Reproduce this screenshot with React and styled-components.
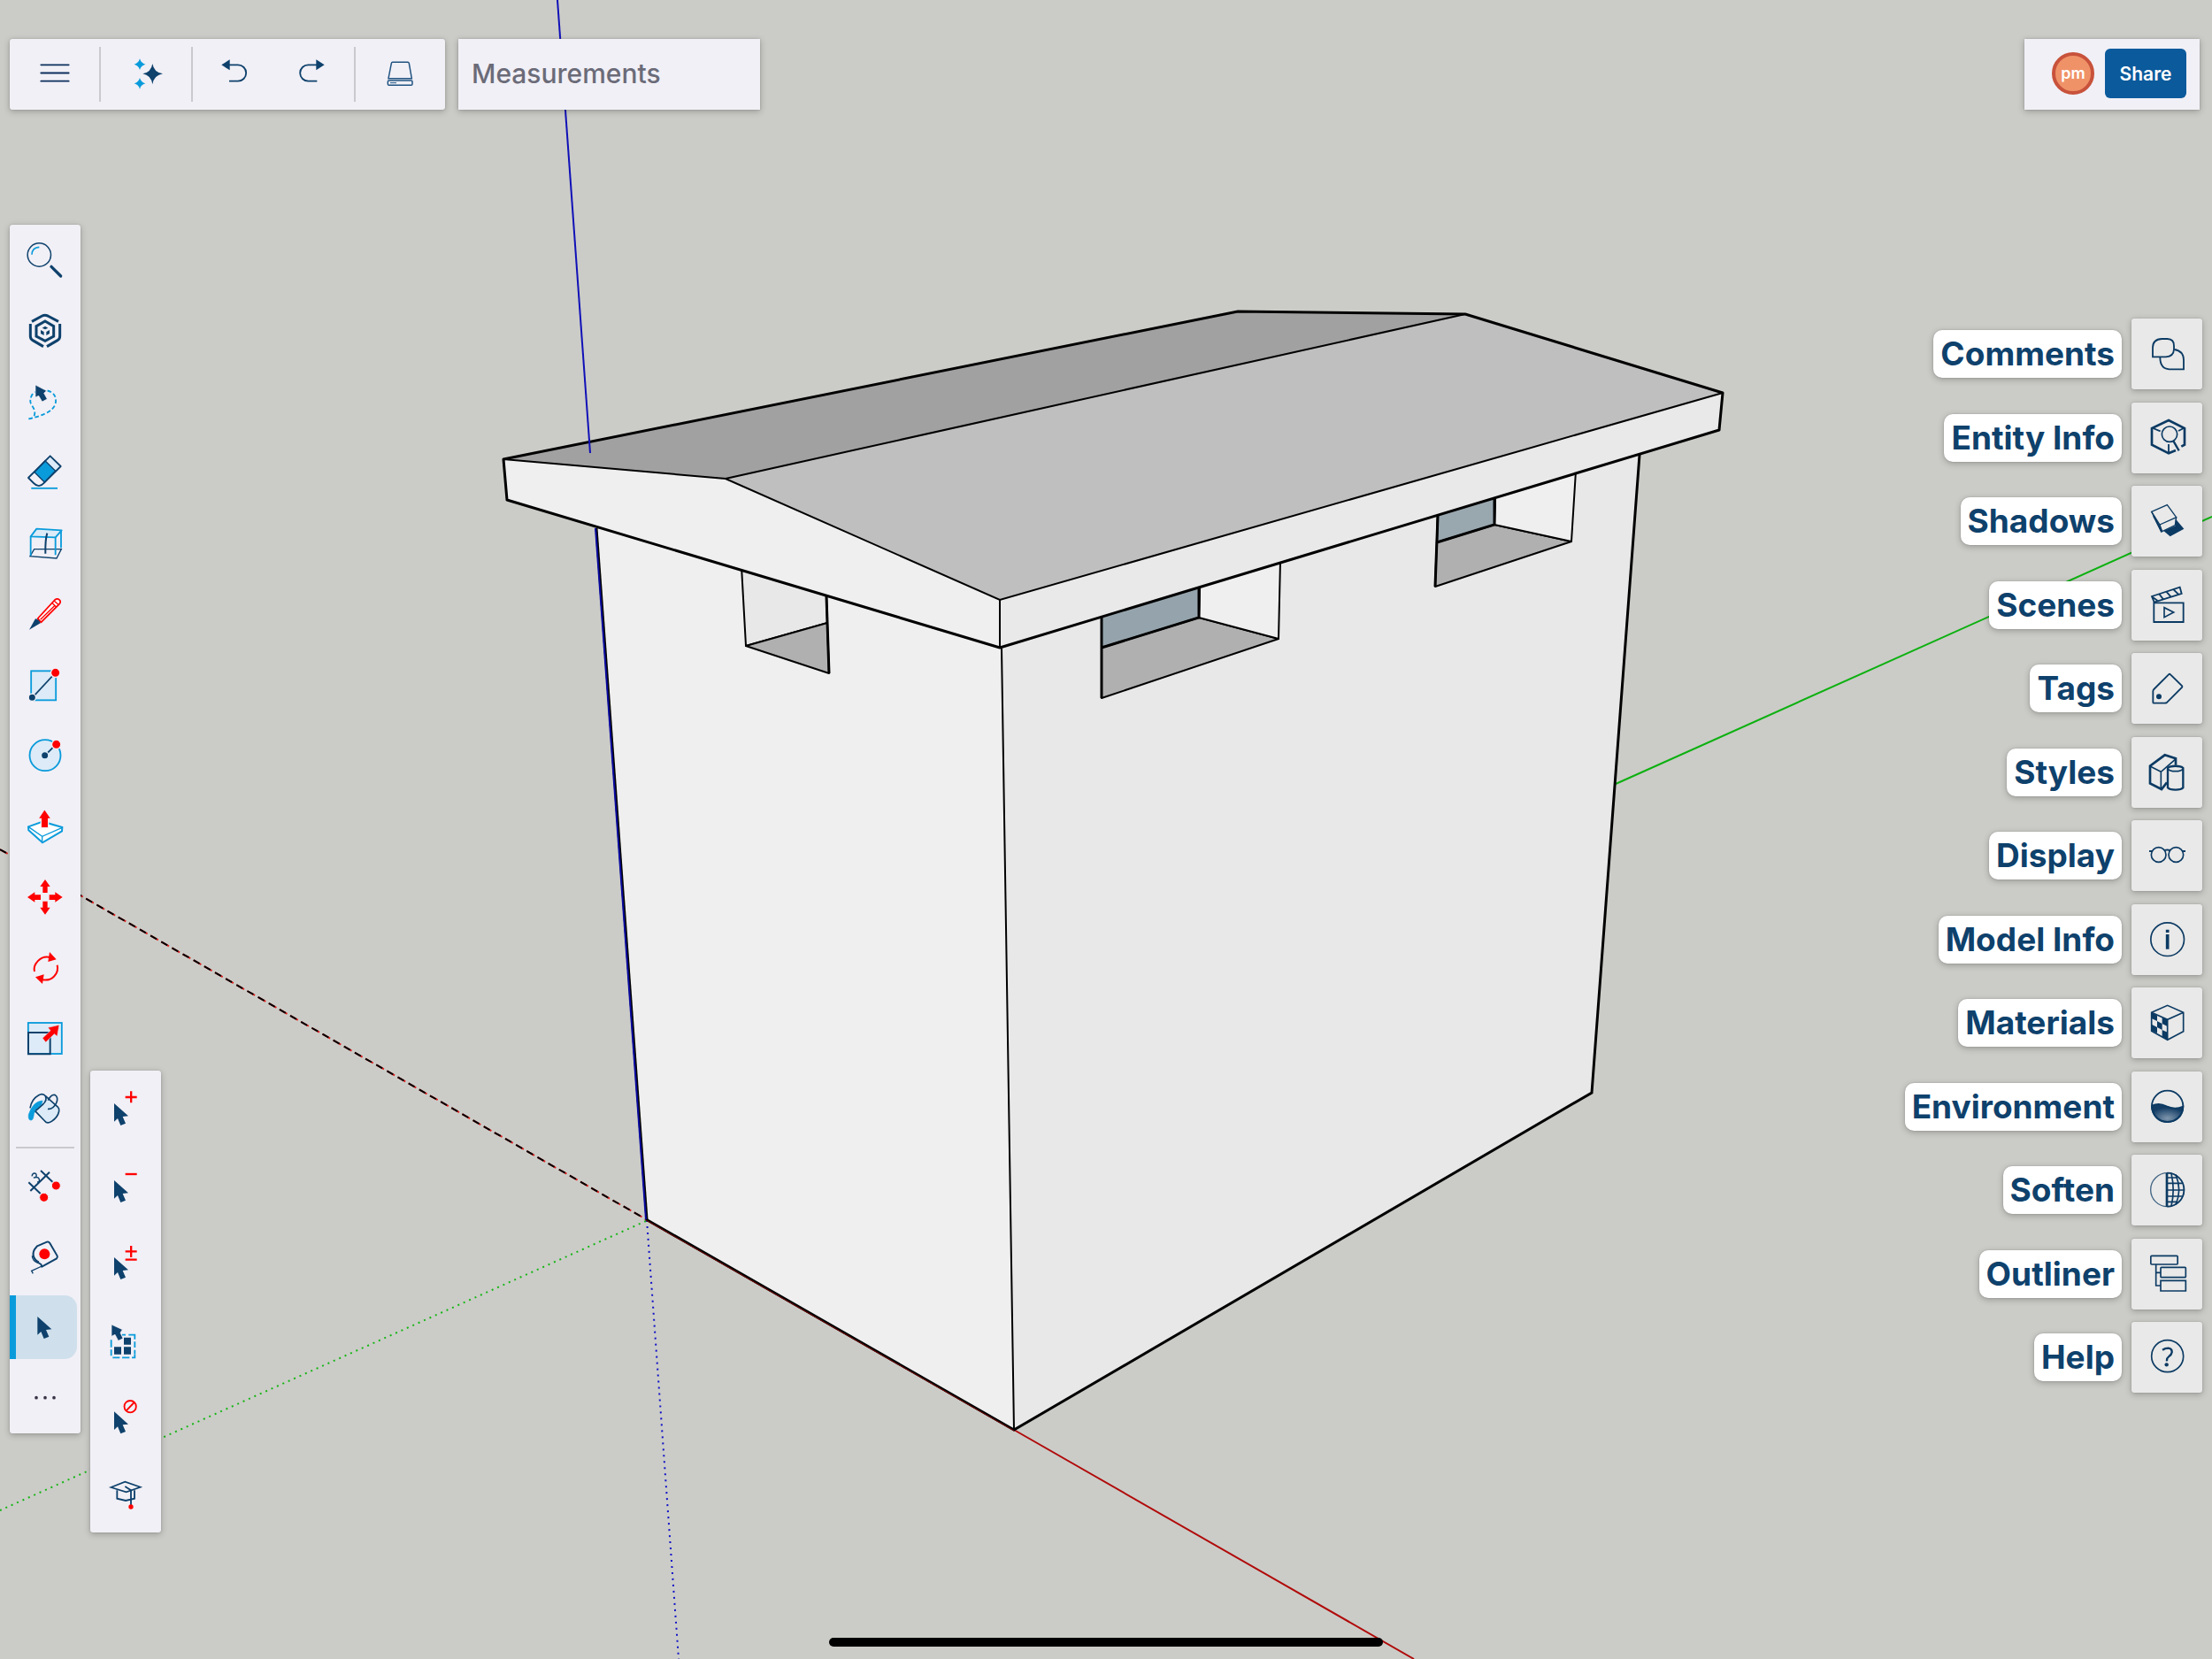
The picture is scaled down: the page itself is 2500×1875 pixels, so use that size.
import React from "react";
import styled, { createGlobalStyle } from "styled-components";

const navy = "#0e416c";
const ink = "#0b3a63";
const blue = "#0a9bdb";
const pale = "#dcebf7";
const red = "#ff0000";
const panel = "#f1f0f6";
const shadow = "0 2px 7px rgba(40, 40, 40, 0.3), 0 0 2px rgba(40, 40, 40, 0.2)";

const GlobalStyle = createGlobalStyle`
  * { box-sizing: border-box; }
  body { margin: 0; background: #cbccc7; font-family: Inter, "Liberation Sans", sans-serif; }
  button { margin: 0; padding: 0; border: 0; background: none; font: inherit; cursor: pointer; }
`;

const Shell = styled.div`
  position: relative;
  min-height: 100vh;
  display: flex;
  flex-direction: column;
  overflow: hidden;
  background: #cbccc7;
`;

/* The model view fills the window and lies under every panel. */
const Scene = styled.svg`
  position: absolute;
  inset: 0;
  width: 100%;
  height: 100%;
`;

const Header = styled.header`
  position: relative;
  display: flex;
  gap: 15px;
  padding: 44px 14px 0 11px;
`;

const TopBar = styled.div`
  display: flex;
  align-items: center;
  width: 492px;
  height: 80px;
  border-radius: 3px;
  background: ${panel};
  box-shadow: ${shadow};
`;

const TopButton = styled.button`
  flex: 1;
  display: flex;
  justify-content: center;
`;

const TopPair = styled.div`
  display: flex;
  width: 182px;
  padding: 0 3px;
`;

const TopDivider = styled.div`
  width: 2px;
  height: 62px;
  background: #cacace;
`;

const MeasureBox = styled.input`
  width: 341px;
  height: 80px;
  padding: 0 15px 2px;
  border: 0;
  border-radius: 0;
  outline: 0;
  background: ${panel};
  box-shadow: ${shadow};
  color: #6b6b78;
  font: 500 30px/36px Inter, "Liberation Sans", sans-serif;
  &::placeholder { color: #6b6b78; opacity: 1; }
`;

const Account = styled.div`
  display: flex;
  align-items: center;
  gap: 12px;
  height: 80px;
  margin-left: auto;
  padding: 0 15px 2px 31px;
  background: ${panel};
  box-shadow: ${shadow};
`;

const Avatar = styled.button`
  width: 48px;
  height: 48px;
  border: 4px solid #c8523b;
  border-radius: 50%;
  background: #f09268;
  color: #fff;
  font-size: 18px;
  font-weight: 600;
  line-height: 36px;
`;

const ShareButton = styled.button`
  width: 92px;
  height: 56px;
  border-radius: 6px;
  background: #0a5a9c;
  color: #fff;
  font-size: 21px;
  font-weight: 600;
`;

const Workspace = styled.main`
  position: relative;
  display: flex;
  align-items: flex-start;
  gap: 11px;
  padding: 130px 11px 0;
`;

const ToolRail = styled.div`
  display: flex;
  flex-direction: column;
  width: 80px;
  border-radius: 3px;
  background: ${panel};
  box-shadow: ${shadow};
`;

const RailDivider = styled.div`
  height: 2px;
  margin: 2px 7px;
  background: #cacace;
`;

const ToolButton = styled.button`
  display: flex;
  height: 80px;
  padding: 0;
  background: ${(p) =>
    p.$active ? `linear-gradient(90deg, ${blue} 7px, #cfe0ec 7px)` : "none"};
  ${(p) =>
    p.$active &&
    `height: 72px; margin: 4px 4px 4px 0; align-items: center; border-radius: 0 14px 14px 0;`}
`;

const Flyout = styled.div`
  display: flex;
  flex-direction: column;
  width: 80px;
  margin-top: 956px;
  border-radius: 3px;
  background: ${panel};
  box-shadow: ${shadow};
`;

const FlyoutButton = styled.button`
  display: flex;
  height: 87px;
`;

const PanelList = styled.nav`
  display: flex;
  flex-direction: column;
  justify-content: space-between;
  align-items: flex-end;
  min-height: 1214px;
  margin: 106px 0 0 auto;
`;

const PanelButton = styled.button`
  display: flex;
  align-items: center;
  gap: 11px;
`;

const PanelLabel = styled.span`
  height: 54px;
  padding: 0 8px;
  border-radius: 10px;
  background: #fff;
  box-shadow: ${shadow};
  color: ${navy};
  font-size: 37px;
  font-weight: 700;
  line-height: 53px;
  white-space: nowrap;
`;

const PanelTile = styled.span`
  display: flex;
  width: 80px;
  height: 80px;
  border-radius: 3px;
  background: #e9e9e9;
  box-shadow: ${shadow};
`;

const IconSvg = styled.svg`
  display: block;
  flex: none;
  fill: none;
  stroke-width: 5.5;
`;

/* Icons are drawn at three units to the pixel; x and y name the corner of the icon's cell. */
function Icon({ x, y, h = 80, children, color = navy }) {
  return (
    <IconSvg width="80" height={h} viewBox={`${x} ${y} 240 ${h * 3}`} stroke={color} aria-hidden="true">
      {children}
    </IconSvg>
  );
}

const cursorPath = "M0 0V62L12 51L22 75L39 68L29 45L48 43Z";
const Cursor = ({ x, y }) => (
  <path d={cursorPath} fill={navy} stroke="none" transform={`translate(${x} ${y})`} />
);

const topIcons = {
  menu: (
    <Icon x={65} y={42}>
      <path d="M138 130H232M138 157.500H232M138 185H232" strokeLinecap="round" stroke="#0c2f5c" />
    </Icon>
  ),
  sparkles: (
    <Icon x={375} y={42}>
      <path d="M517 126Q522 156 552 160Q522 165 517 196Q512 165 484 160Q512 156 517 126Z" fill={navy} stroke="none" />
      <path d="M474 109Q478 124 493 128Q478 132 474 147Q470 132 455 128Q470 124 474 109ZM474 174Q478 189 493 193Q478 197 474 212Q470 197 455 193Q470 189 474 174Z" fill={blue} stroke="none" />
    </Icon>
  ),
  undo: (
    <Icon x={674} y={42}>
      <path d="M776 130H806A27.500 27.500 0 0 1 806 185H776" />
      <path d="M750 130L778 112V148Z" fill={navy} stroke="none" />
    </Icon>
  ),
  redo: (
    <Icon x={938} y={42}>
      <path d="M1074 130H1044A27.500 27.500 0 0 0 1044 185H1074" />
      <path d="M1099 130L1071 112V148Z" fill={navy} stroke="none" />
    </Icon>
  ),
  drive: (
    <Icon x={1237} y={42}>
      <g strokeWidth="4.500" stroke="#1f5280">
        <path d="M1332 121H1384Q1387 121 1388 125L1397 176H1318L1328 125Q1329 121 1332 121Z" />
        <rect x="1316" y="183" width="83" height="16" rx="4" />
        <path d="M1324 191H1345" strokeWidth="3" />
      </g>
    </Icon>
  ),
};

const tools = [
  ["Search", <Icon x={33} y={42}>
    <circle cx="133" cy="144" r="39.500" strokeWidth="4.500" />
    <path d="M108 143Q109 119 133 118" stroke={blue} strokeWidth="5" />
    <path d="M174 184L206 216" strokeWidth="10" strokeLinecap="round" />
  </Icon>],
  ["3D Warehouse", <Icon x={33} y={282}>
    <g strokeWidth="9">
      <path d="M108 370L143 351Q152 347 162 351L198 370" />
      <path d="M103 378V420Q103 429 111 434L147 455M203 378V420Q203 429 195 434L159 455" />
      <path d="M153 369L182 386V420L153 436L123 420V386Z" />
    </g>
    <path d="M153 386L163 392L153 397L143 392ZM138 399L149 405V417L138 411ZM168 399L157 405V417L168 411Z" fill={navy} stroke="none" />
  </Icon>],
  ["Lasso", <Icon x={33} y={522}>
    <path d="M97 700Q114 700 117 686Q121 672 108 655Q97 640 109 618C130 596 176 598 187 625C196 655 180 682 97 700" stroke={blue} strokeDasharray="14 8" />
    <path d="M120 585L158 605L149 613L160 633L143 642L131 622L120 627Z" fill={navy} stroke={panel} strokeWidth="2" />
  </Icon>],
  ["Eraser", <Icon x={33} y={762}>
    <path d="M155 843L170 825L206 861L188 878Z" fill={pale} stroke="none" />
    <path d="M153 842L188 877L151 915L117 881Z" fill={blue} strokeWidth="4" />
    <path d="M170 826L206 861L150 917Q132 937 114 918L96 900Z" strokeLinejoin="round" />
    <path d="M106 935.500H195" stroke={blue} />
  </Icon>],
  ["Box", <Icon x={33} y={1002}>
    <path d="M102 1166L116 1142H208L192 1173Z" strokeWidth="4" />
    <path d="M104 1099L124 1073L209 1078L188 1102Z" fill={pale} stroke={blue} strokeLinejoin="round" />
    <path d="M104 1099V1164M188 1102V1162M207 1080V1138" stroke={blue} />
    <path d="M160 1088Q153 1110 154 1157" strokeWidth="6" />
  </Icon>],
  ["Line", <Icon x={33} y={12}>
    <path d="M128 147L186 84Q196 76 204 87Q206 93 202 97L139 160Z" stroke={red} fill="#fff" strokeLinejoin="round" />
    <path d="M137 151L187 102M176 94L191 108M184 88L198 100" stroke={red} strokeWidth="4" />
    <path d="M99 185L120 148Q132 149 137 163Z" fill={navy} stroke="none" />
  </Icon>],
  ["Rectangle", <Icon x={33} y={252}>
    <rect x="105.500" y="325" width="84" height="99" fill={pale} stroke={blue} />
    <path d="M110 415L188 331" strokeWidth="5" />
    <circle cx="109" cy="415" r="12.500" fill={navy} stroke={panel} strokeWidth="4" />
    <circle cx="188" cy="331" r="15.500" fill={red} stroke={panel} strokeWidth="4" />
  </Icon>],
  ["Circle", <Icon x={33} y={492}>
    <circle cx="153" cy="611" r="52.500" fill={pale} stroke={blue} />
    <path d="M153 611L190 574" />
    <circle cx="152" cy="611" r="12.500" fill={navy} stroke={pale} strokeWidth="4" />
    <circle cx="191" cy="574" r="15.500" fill={red} stroke={panel} strokeWidth="4" />
  </Icon>],
  ["Push/Pull", <Icon x={33} y={732}>
    <path d="M96 853L145 836L211 855L210 868L144 907L97 865Z" fill="#fff" stroke={blue} strokeWidth="6" />
    <path d="M96 853L143 886L211 856M143 886V905" stroke={blue} strokeWidth="4" />
    <path d="M151 793L174 826H164V857H139V826H129Z" fill={red} stroke={panel} strokeWidth="4" />
  </Icon>],
  ["Move", <Icon x={33} y={972}>
    <path d="M153 1032L170 1056H161V1077H145V1056H136ZM153 1151L170 1127H161V1106H145V1127H136ZM93 1092L118 1075V1084H138V1101H118V1109ZM212 1092L187 1075V1084H167V1101H187V1109Z" fill={red} stroke="none" />
  </Icon>],
  ["Rotate", <Icon x={33} y={-18}>
    <path d="M117 114C111 91 136 58 170 66M194 92C201 120 176 150 142 141" stroke={red} strokeWidth="6" />
    <path d="M168 48L191 73L163 81ZM144 156L120 133L149 124Z" fill={red} stroke="none" />
  </Icon>],
  ["Scale", <Icon x={33} y={222}>
    <rect x="95.500" y="288" width="114" height="105" fill={pale} stroke={blue} />
    <path d="M96 321H170V394H96Z" strokeWidth="6" />
    <path d="M201 295L194 334L184 326L155 354L144 340L171 314L162 304Z" fill={red} stroke={pale} strokeWidth="2" />
  </Icon>],
  ["Paint", <Icon x={33} y={462}>
    <path d="M155 539L198 577C206 594 181 632 156 626L120 591L148 545Z" fill={pale} stroke="none" />
    <path d="M144 552Q112 554 97 599Q95 617 104 618Q113 620 115 596L121 584L141 564Z" fill={blue} stroke={blue} strokeWidth="2" />
    <path d="M119 587L152 621Q160 632 175 622Q196 608 200 588Q202 579 196 573L155 537Q145 524 130 534Q107 547 102 577" strokeWidth="5" />
    <path d="M154 537Q161 550 145 565L121 586M163 551Q174 529 187 533Q199 541 191 560Q179 583 162 580" strokeWidth="5" />
  </Icon>],
];

const measureTools = [
  ["Dimension", <Icon x={33} y={0}>
    <path d="M103 138L168 74M97 109L137 147M138 69L178 107" strokeWidth="6" />
    <path d="M109 88C107 75 127 75 123 88Q120 94 114 93Q129 89 132 96Q137 108 126 108" strokeWidth="4.500" />
    <circle cx="190" cy="120" r="15" fill={red} stroke={panel} strokeWidth="3" />
    <circle cx="149" cy="160" r="15" fill={red} stroke={panel} strokeWidth="3" />
  </Icon>],
  ["Tape Measure", <Icon x={33} y={240}>
    <path d="M126 325L159 311Q165 309 169 315L194 358Q196 363 192 367L142 395L139 387Q102 365 117 336Z" strokeWidth="6" />
    <path d="M142 393L107 409L112 418M109 358Q110 377 130 383M114 359Q116 371 132 378" strokeWidth="4" />
    <circle cx="151" cy="352" r="18" fill={red} stroke="none" />
  </Icon>],
];

const flyoutTools = [
  ["Add", <Icon x={306} y={-9} h={87}>
    <Cursor x={387} y={102} />
    <path d="M425 81H464M444.500 61V100" stroke={red} strokeWidth="7" />
  </Icon>],
  ["Subtract", <Icon x={306} y={-9} h={87}>
    <Cursor x={387} y={102} />
    <path d="M425 81H464" stroke={red} strokeWidth="7" />
  </Icon>],
  ["Add/Subtract", <Icon x={306} y={252} h={87}>
    <Cursor x={387} y={363} />
    <path d="M425 343H464M444.500 324V363M425 371H464" stroke={red} strokeWidth="7" />
  </Icon>],
  ["Select All", <Icon x={306} y={513} h={87}>
    <path d="M414 626H426M436 626H457V641M457 649V669M457 677V690M457 691V703H447M439 703H414M406 703H382M377 697V676M377 668V643" stroke={blue} />
    <path d="M387 667H411V692H387ZM420 667H444V692H420ZM420 635H444V659H420Z" fill={navy} stroke="none" />
    <path d="M378 591L415 608L408 619L417 638L401 646L390 625L378 631Z" fill={navy} stroke={panel} strokeWidth="2" />
  </Icon>],
  ["Select None", <Icon x={306} y={774} h={87}>
    <Cursor x={387} y={886} />
    <circle cx="441.500" cy="869" r="20" stroke={red} />
    <path d="M428 883L455 855" stroke={red} />
  </Icon>],
  ["Learn", <Icon x={0} y={0} h={87}>
    <path d="M70 108L118 89L170 107L122 124Z" strokeWidth="5" />
    <path d="M91 118V146L120 153L150 146V118M118 105L138 118V172" />
    <circle cx="138" cy="174" r="8" fill={red} stroke="none" />
  </Icon>],
];

const panels = [
  ["Comments", <Icon x={807} y={59} color={ink}>
    <path d="M879 189V158Q879 129 910 128H929Q951 129 951 151V163Q950 187 924 189Z" />
    <path d="M952 164Q984 169 984 200V231H935Q904 229 904 191" />
  </Icon>],
  ["Entity Info", <Icon x={807} y={343} color={ink}>
    <path d="M957 505L933 515L876 486V430L933 403L987 430V486L976 492" strokeWidth="8" />
    <path d="M880 430L905 440M984 430L966 439M933 484V512" />
    <circle cx="936" cy="450" r="26" strokeWidth="5" />
    <path d="M949 473L968 506" strokeWidth="7" />
  </Icon>],
  ["Shadows", <Icon x={807} y={626} color={ink}>
    <path d="M956 738L985 772L938 798L916 779L956 762Z" fill={ink} stroke="none" />
    <path d="M875 714L928 691L959 733L903 758Z" fill="#e9e9e9" strokeWidth="4" />
    <path d="M875 714L908 782L955 760L959 733M903 758L910 779" strokeWidth="4" />
    <path d="M882 728L910 781" strokeWidth="6" />
  </Icon>],
  ["Scenes", <Icon x={807} y={910} color={ink}>
    <path d="M883 1022H983V1087H883Z" />
    <path d="M876 1000L971 969L977 991L884 1020ZM900 991L915 1010M925 984L941 1002M950 977L967 994M879 1003L895 1014" />
    <path d="M918 1038V1071L950 1054Z" strokeWidth="5" />
  </Icon>],
  ["Tags", <Icon x={807} y={23} color={ink}>
    <path d="M880 153Q880 149 883 146L933 96Q936 93 939 96L978 134Q980 137 978 140L928 190Q924 193 920 193H883Q880 193 880 190Z" />
    <circle cx="900" cy="171" r="9" fill={ink} stroke="none" />
  </Icon>],
  ["Styles", <Icon x={807} y={306} color={ink}>
    <path d="M927 460L909 483L870 463V404L920 367L957 379V401" strokeWidth="8" />
    <path d="M870 405L907 424L955 382M907 424V482" strokeWidth="5" />
    <path d="M930 411V478C938 487 974 487 982 478V411C974 402 938 402 930 411Z" strokeWidth="7" />
    <path d="M930 413C938 425 974 425 982 413" strokeWidth="5" />
  </Icon>],
  ["Display", <Icon x={807} y={590} color={ink}>
    <circle cx="899" cy="707" r="25" strokeWidth="5" />
    <circle cx="958" cy="707" r="25" strokeWidth="5" />
    <path d="M867 695H879M978 695H990M919 692Q928 689 938 692" />
  </Icon>],
  ["Model Info", <Icon x={807} y={873} color={ink}>
    <circle cx="929" cy="992" r="56.500" strokeWidth="5" />
    <path d="M929 975V1025M929 959V969" strokeWidth="11" />
  </Icon>],
  ["Materials", <Icon x={807} y={46} color={ink}>
    <path d="M875 131L894 141V160L875 151ZM911 148L929 154V178L911 169ZM894 160L911 169V190L894 181ZM875 171L894 181V201L875 192ZM911 190L929 198V224L911 213Z" fill={ink} stroke="none" />
    <path d="M875 131L929 107L983 131V195L929 224L875 194ZM875 131L929 155L983 131M929 155V222" strokeWidth="5" />
  </Icon>],
  ["Environment", <Icon x={807} y={330} color={ink}>
    <defs>
      <radialGradient id="sea" cx="0.5" cy="0.8" r="0.6">
        <stop offset="0" stopColor="#7f96ad" />
        <stop offset="1" stopColor="#143d65" />
      </radialGradient>
    </defs>
    <path d="M877 446Q900 434 926 448Q953 461 982 449C981 517 879 520 876 448Z" fill="url(#sea)" />
    <circle cx="929" cy="448" r="53" />
  </Icon>],
  ["Soften", <Icon x={807} y={613} color={ink}>
    <circle cx="929" cy="732" r="57" strokeWidth="4" opacity="0.75" />
    <path d="M928 675A57 57 0 0 1 928 789" strokeWidth="5" />
    <path d="M927 675V790" strokeWidth="8" />
    <path d="M942 677Q955 732 942 787M957 681Q979 732 957 783M929 691H964M929 710H980M929 733H986M929 754H980M929 773H964" strokeWidth="5" />
  </Icon>],
  ["Outliner", <Icon x={807} y={897} color={ink}>
    <g strokeWidth="5">
      <rect x="872.500" y="955" width="91" height="29" rx="3" />
      <rect x="906" y="994" width="85" height="34" rx="3" />
      <path d="M906 1039H991V1074H906ZM890 984V1056H906M890 1012H906" />
    </g>
  </Icon>],
  ["Help", <Icon x={807} y={1180} color={ink}>
    <circle cx="929" cy="1296" r="54" strokeWidth="5" />
    <path d="M912 1275Q921 1269 932 1269Q945 1271 944 1283Q943 1291 933 1298Q926 1303 927 1313" strokeWidth="7" />
    <circle cx="926" cy="1325" r="6.500" fill={ink} stroke="none" />
  </Icon>],
];

function Model() {
  return (
    <Scene viewBox="0 0 2500 1875" preserveAspectRatio="xMidYMid slice" fill="none" role="img" aria-label="Shed model">
      <path d="M1826 886L2500 584" stroke="#0cb010" strokeWidth="2" />
      <path d="M730 1380L0 1707" stroke="#15b515" strokeWidth="2" strokeDasharray="2 5" />
      <path d="M731 1379L767 1875" stroke="#1010c8" strokeWidth="2" strokeDasharray="2 5" />
      <path d="M0 960L730 1378" stroke="#e02020" strokeWidth="2" strokeDasharray="10 4" />
      <path d="M0 960L730 1378" stroke="#000" strokeWidth="2" strokeDasharray="8 6" />
      <path d="M1146 1616L1598 1875" stroke="#b00a0a" strokeWidth="2" />

      <path d="M673 594L1132 731L1146 1616L730 1378Z" fill="#efefef" />
      <path d="M1132 731L1853 512L1799 1235L1146 1616Z" fill="#e8e8e8" />

      <g stroke="#000" strokeWidth="2" strokeLinejoin="round">
        <path d="M838 640L843 730L935 704L934 670Z" fill="#e8e8e8" />
        <path d="M843 730L937 761L935 704Z" fill="#b0b0b0" />
        <path d="M1245 694V789L1445 722L1355 698Z" fill="#b0b0b0" />
        <path d="M1355 698L1356 660L1447 634L1445 722Z" fill="#efefef" />
        <path d="M1245 732V694L1356 660L1355 698Z" fill="#95a4ac" />
        <path d="M1625 580L1622 663L1776 612L1689 593Z" fill="#b0b0b0" />
        <path d="M1689 593L1690 560L1781 532L1776 612Z" fill="#efefef" />
        <path d="M1624 613L1625 580L1690 560L1689 593Z" fill="#99a7af" />
      </g>

      <path d="M569 519L1399 352L1656 355L820 541Z" fill="#a1a1a1" />
      <path d="M820 541L1656 355L1947 444L1130 678Z" fill="#bfbfbf" />
      <path d="M569 519L820 541L1130 678V733L573 565Z" fill="#efefef" />
      <path d="M1130 678L1947 444L1943 486L1130 733Z" fill="#e9e9e9" />

      <path d="M569 519L820 541L1130 678L1947 444M820 541L1656 355M1130 678V733M1132 733L1146 1616" stroke="#000" strokeWidth="2" />
      <path d="M569 519L1399 352L1656 355L1947 444L1943 486L1130 732L573 565Z" stroke="#000" strokeWidth="3" strokeLinejoin="round" />
      <path d="M934 674L937 761M1245 698V789M1245 732L1355 698V664M1622 663L1625 583M1624 613L1689 593V564" stroke="#000" strokeWidth="3" />
      <path d="M1853 514L1799 1235L1146 1616L730 1378" stroke="#000" strokeWidth="3" />
      <path d="M730 1379L1146 1617" stroke="#7a0000" strokeWidth="1" />
      <path d="M674 597L731 1378" stroke="#000" strokeWidth="3" />
      <path d="M673 597L730 1378" stroke="#0a0aa0" strokeWidth="2" />
      <path d="M630 0L667 512" stroke="#1010b8" strokeWidth="2" />
    </Scene>
  );
}

const HomeIndicator = styled.div`
  position: absolute;
  bottom: 14px;
  left: 50%;
  width: 626px;
  height: 10px;
  border-radius: 5px;
  background: #000;
  transform: translateX(-50%);
`;

const renderTool = ([name, icon]) => (
  <ToolButton key={name} aria-label={name}>{icon}</ToolButton>
);

export default function App() {
  return (
    <Shell>
      <GlobalStyle />
      <Model />
      <Header>
        <TopBar role="toolbar" aria-label="File">
          <TopButton aria-label="Menu">{topIcons.menu}</TopButton>
          <TopDivider />
          <TopButton aria-label="Assistant">{topIcons.sparkles}</TopButton>
          <TopDivider />
          <TopPair>
            <TopButton aria-label="Undo">{topIcons.undo}</TopButton>
            <TopButton aria-label="Redo">{topIcons.redo}</TopButton>
          </TopPair>
          <TopDivider />
          <TopButton aria-label="Save">{topIcons.drive}</TopButton>
        </TopBar>
        <MeasureBox type="text" placeholder="Measurements" aria-label="Measurements" />
        <Account>
          <Avatar>pm</Avatar>
          <ShareButton>Share</ShareButton>
        </Account>
      </Header>
      <Workspace>
        <ToolRail role="toolbar" aria-label="Tools">
          {tools.map(renderTool)}
          <RailDivider />
          {measureTools.map(renderTool)}
          <ToolButton $active aria-label="Select" aria-pressed="true">
            <Icon x={33} y={480}><Cursor x={127} y={564} /></Icon>
          </ToolButton>
          <ToolButton aria-label="More tools">
            <Icon x={33} y={720}>
              <path d="M123 839H123.100M153 839H153.100M183 839H183.100" stroke="#3a3346" strokeWidth="11" strokeLinecap="round" />
            </Icon>
          </ToolButton>
        </ToolRail>
        <Flyout role="toolbar" aria-label="Selection">
          {flyoutTools.map(([name, icon]) => (
            <FlyoutButton key={name} aria-label={name}>{icon}</FlyoutButton>
          ))}
        </Flyout>
        <PanelList aria-label="Panels">
          {panels.map(([name, icon]) => (
            <PanelButton key={name}>
              <PanelLabel>{name}</PanelLabel>
              <PanelTile>{icon}</PanelTile>
            </PanelButton>
          ))}
        </PanelList>
      </Workspace>
      <HomeIndicator />
    </Shell>
  );
}
